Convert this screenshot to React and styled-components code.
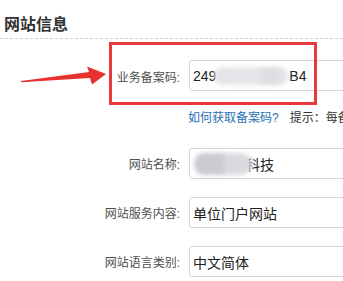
import React from 'react';
import styled, { createGlobalStyle } from 'styled-components';

const GlobalStyle = createGlobalStyle`
  html, body {
    margin: 0;
    padding: 0;
    background: #fff;
  }
  body {
    font-family: "Liberation Sans", "Noto Sans CJK SC", sans-serif;
    overflow: hidden;
  }
`;

const Page = styled.div`
  position: relative;
  width: 343px;
  height: 281px;
  overflow: hidden;
  background: #fff;
`;

const Header = styled.div`
  padding: 13px 0 1px 4px;
  border-bottom: 1px dashed #cfcfcf;
`;

const Title = styled.h2`
  margin: 0;
  font-size: 16px;
  line-height: 24px;
  font-weight: bold;
  color: #333;
`;

const Form = styled.div`
  display: flex;
  flex-direction: column;
  gap: 18px;
  padding-top: 21px;
`;

const Row = styled.div`
  display: grid;
  grid-template-columns: 180px 200px;
  column-gap: 9px;
  align-items: center;
  height: 31px;
`;

const Label = styled.label`
  text-align: right;
  font-size: 12px;
  color: #505050;
  padding-top: ${(p) => (p.$low ? '2px' : '0')};
  white-space: nowrap;
`;

const Input = styled.div`
  box-sizing: border-box;
  height: 31px;
  border: 1px solid #d6d6d6;
  border-radius: 3px;
  padding: 0 3px;
  display: flex;
  align-items: center;
  font-size: 14px;
  color: #222;
  white-space: nowrap;
  background: #fff;
`;

const Redacted = styled.span`
  position: relative;
  z-index: 1;
  display: inline-block;
  width: ${(p) => p.$w}px;
  height: ${(p) => p.$h}px;
  margin: 0 ${(p) => p.$mr}px 0 ${(p) => p.$ml}px;
  border-radius: ${(p) => p.$h / 2}px;
  background: ${(p) => p.$bg};
  filter: blur(2px);
`;

const Hint = styled.div`
  display: grid;
  grid-template-columns: 180px auto;
  column-gap: 8px;
  margin: 1px 0 4px;
  font-size: 12px;
  line-height: 16px;
  white-space: nowrap;
`;

const HintLine = styled.div`
  grid-column: 2;
  display: flex;
  gap: 11px;
`;

const HelpLink = styled.a`
  color: #1f6fb5;
  text-decoration: none;
`;

const Tip = styled.span`
  color: #333;
`;

const Highlight = styled.div`
  position: absolute;
  left: 109px;
  top: 42px;
  width: 208px;
  height: 63px;
  box-sizing: border-box;
  border: 3px solid #e83a3c;
  pointer-events: none;
`;

const Arrow = styled.svg`
  position: absolute;
  left: 0;
  top: 0;
  pointer-events: none;
`;

export default function App() {
  return (
    <Page>
      <GlobalStyle />
      <Header>
        <Title>网站信息</Title>
      </Header>
      <Form>
        <Row>
          <Label $low>业务备案码:</Label>
          <Input>
            249
            <Redacted
              $w={74}
              $h={18}
              $ml={-2}
              $mr={1}
              $bg="linear-gradient(90deg, #e4e4e8 0%, #e6e6ea 55%, #dcdce0 75%, #e6e6ea 100%)"
            />
            B4
          </Input>
        </Row>
        <Hint>
          <HintLine>
            <HelpLink href="#">如何获取备案码?</HelpLink>
            <Tip>提示：每备案号</Tip>
          </HintLine>
        </Hint>
        <Row>
          <Label>网站名称:</Label>
          <Input>
            <Redacted
              $w={58}
              $h={22}
              $ml={1}
              $mr={-6}
              $bg="linear-gradient(90deg, #c9c9cf 0%, #cbcbd1 50%, #dadade 55%, #dcdce0 100%)"
            />
            科技
          </Input>
        </Row>
        <Row>
          <Label>网站服务内容:</Label>
          <Input>单位门户网站</Input>
        </Row>
        <Row>
          <Label>网站语言类别:</Label>
          <Input>中文简体</Input>
        </Row>
      </Form>
      <Highlight />
      <Arrow width="343" height="281" viewBox="0 0 343 281">
        <polygon
          points="21,81 89,72 87,66.5 106,74 92,84.5 90,78 21,82.3"
          fill="#e8302f"
        />
      </Arrow>
    </Page>
  );
}
